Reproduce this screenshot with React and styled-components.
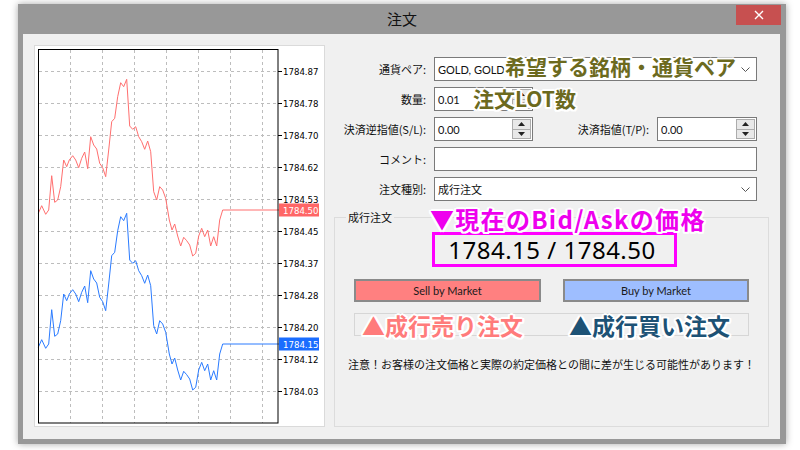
import React from "react";
import styled, { createGlobalStyle } from "styled-components";

const GlobalStyle = createGlobalStyle`
  *, *::before, *::after { box-sizing: border-box; }
  html, body { margin: 0; padding: 0; background: #fff; }
  body { font-family: "Noto Sans", "Noto Sans CJK JP", sans-serif; color: #111; }
`;

const Page = styled.div`
  width: 800px;
  height: 450px;
  overflow: hidden;
  padding: 4px 0 0 18px;
`;

const Window = styled.div`
  width: 768px;
  height: 440px;
  background: #989898;
  box-shadow: 0 0 7px rgba(0, 0, 0, 0.35);
  display: flex;
  flex-direction: column;
`;

const TitleBar = styled.div`
  height: 30px;
  display: grid;
  grid-template-columns: 1fr auto 1fr;
`;

const Title = styled.div`
  grid-column: 2;
  align-self: center;
  font-family: "Noto Sans CJK JP", sans-serif;
  font-size: 15px;
  line-height: 20px;
  color: #111;
`;

const CloseButton = styled.div`
  grid-column: 3;
  justify-self: end;
  margin: 1px 5px 0 0;
  width: 45px;
  height: 20px;
  background: #c75050;
  display: flex;
  align-items: center;
  justify-content: center;
`;

const Content = styled.div`
  flex: 1;
  margin: 0 6px 5px 5px;
  background: #f0f0f0;
  display: flex;
  gap: 9px;
  padding: 11px 11px 12px 11px;
`;

const ChartPanel = styled.div`
  flex: 0 0 291px;
  background: #fff;
  border: 1px solid #dadada;
  svg { display: block; }
`;

const RightPane = styled.div`
  flex: 1;
  min-width: 0;
  display: flex;
  flex-direction: column;
  padding-top: 12px;
`;

const Form = styled.div`
  display: flex;
  flex-direction: column;
  gap: 6px;
  padding-right: 12px;
`;

const Row = styled.div`
  position: relative;
  display: flex;
  align-items: center;
  height: 24px;
`;

const Label = styled.div`
  ${(p) => (p.$grow ? "flex: 1;" : "width: 92px;")}
  margin-right: 8px;
  text-align: right;
  font-family: "Noto Sans CJK JP", sans-serif;
  font-size: 11px;
  white-space: nowrap;
  color: #111;
`;

const Field = styled.div`
  ${(p) => (p.$width ? `flex: 0 0 ${p.$width}px;` : "flex: 1;")}
  height: 24px;
  background: #fff;
  border: 1px solid #7a7a7a;
  display: flex;
  align-items: center;
  padding-left: 3px;
  font-size: 11px;
  font-family: Lato, "Noto Sans CJK JP", sans-serif;
  color: #111;
`;

const FieldText = styled.span`
  flex: 1;
  white-space: nowrap;
`;

const Spinner = styled.div`
  width: 19px;
  height: 20px;
  margin-right: 1px;
  display: flex;
  flex-direction: column;
`;

const SpinButton = styled.div`
  flex: 1;
  background: #e8e8e8;
  border: 1px solid #acacac;
  ${(p) => (p.$down ? "border-top: none;" : "")}
  display: flex;
  align-items: center;
  justify-content: center;
`;

const Chevron = styled.svg`
  margin-right: 6px;
`;

const GroupBox = styled.div`
  position: relative;
  flex: 1;
  margin-top: 16px;
  border: 1px solid #dcdcdc;
  padding: 14px 19px 0 19px;
  display: flex;
  flex-direction: column;
`;

const Caption = styled.div`
  position: absolute;
  top: -9px;
  left: 11px;
  padding: 0 2px;
  background: #f0f0f0;
  font-family: "Noto Sans CJK JP", sans-serif;
  font-size: 11px;
  line-height: 16px;
`;

const PriceRow = styled.div`
  display: flex;
  justify-content: center;
`;

const PriceFrame = styled.div`
  width: 245px;
  height: 35px;
  margin-left: 6px;
  border: 3px solid #ff00ff;
  display: flex;
  align-items: center;
  justify-content: center;
  padding-right: 5px;
  font-family: "Noto Sans", sans-serif;
  font-size: 24px;
  color: #000;
  letter-spacing: 0.5px;
`;

const ButtonRow = styled.div`
  display: grid;
  grid-template-columns: 187px 186px;
  gap: 22px;
  margin-top: 12px;
`;

const ActionButton = styled.div`
  height: 23px;
  background: ${(p) => p.$bg};
  border: 2px solid #8a8a8a;
  display: flex;
  align-items: center;
  justify-content: center;
  font-family: Lato, sans-serif;
  font-size: 11px;
  color: #1a1a1a;
`;

const NoteBox = styled.div`
  display: grid;
  grid-template-columns: 187px 186px;
  gap: 22px;
  margin-top: 11px;
  height: 23px;
  border: 1px solid #d6d6d6;
  align-items: center;
`;

const Warning = styled.div`
  margin: 20px 0 0 -6px;
  font-family: "Noto Sans CJK JP", sans-serif;
  font-size: 11px;
  line-height: 16px;
  white-space: nowrap;
`;

const outline = `
  text-shadow: 2px 0 #fff, -2px 0 #fff, 0 2px #fff, 0 -2px #fff,
    1.5px 1.5px #fff, -1.5px -1.5px #fff, 1.5px -1.5px #fff, -1.5px 1.5px #fff,
    2px 1px #fff, -2px 1px #fff, 2px -1px #fff, -2px -1px #fff;
`;

const Callout = styled.div`
  font-family: "Noto Sans CJK JP", sans-serif;
  font-weight: 700;
  font-size: ${(p) => p.$size}px;
  line-height: ${(p) => p.$size}px;
  color: ${(p) => p.$color};
  letter-spacing: ${(p) => p.$ls || 0}px;
  white-space: nowrap;
  ${outline}
`;

const FloatingCallout = styled(Callout)`
  position: absolute;
  left: ${(p) => p.$left}px;
  top: ${(p) => p.$top}px;
`;

const CellCallout = styled(Callout)`
  padding-left: ${(p) => p.$pad}px;
`;

const red = [
  [38.3, 213.3], [41.7, 205.7], [45.7, 214.3], [48.7, 210], [51.7, 175.7], [54.7, 202.3],
  [57.7, 200], [60.7, 186.7], [63.7, 160], [66.7, 166.7], [69.3, 160], [72.7, 155.7],
  [75.7, 160], [78.7, 167.7], [81.7, 158.3], [84.7, 152], [87.7, 168.7], [90.7, 136.7],
  [93.7, 145], [96.7, 149], [99.7, 163.3], [102.7, 167.7], [105.7, 176.7], [108.7, 150],
  [111.7, 121.7], [114.7, 118.3], [117.7, 96.7], [120.7, 82.7], [123.7, 86.7], [126.7, 79.3],
  [129.7, 126], [132.7, 129.3], [135.7, 126.7], [138.7, 136.7], [141.7, 141.7], [144.7, 149.3],
  [147.7, 141], [150.7, 151.7], [153.7, 191.7], [156.7, 200], [159.7, 186.7], [162.7, 190],
  [165.7, 198.3], [169.3, 220], [172, 230], [174.7, 224], [177.7, 236], [180.7, 246],
  [183.7, 237.3], [186.7, 240.7], [189.7, 245], [192.7, 256], [195.7, 253.3], [198.7, 236],
  [201.7, 228.3], [204.7, 236.7], [207.7, 230], [210.7, 246], [213.7, 236.7], [216.7, 246],
  [219.7, 220], [222.7, 210], [279, 210],
];
const toPts = (arr, dy) => arr.map(([x, y]) => `${x},${y + dy}`).join(" ");

const levels = ["1784.87", "1784.78", "1784.70", "1784.62", "1784.53", "1784.45", "1784.37", "1784.28", "1784.20", "1784.12", "1784.03"];
const vLines = [70, 102, 134, 166, 198, 230, 262];
const axisFont = "'DejaVu Sans', 'Liberation Sans', sans-serif";

function Chart() {
  return (
    <svg width="289" height="380" viewBox="35 46 289 380">
      <g stroke="#bdbdbd" strokeWidth="1" strokeDasharray="3 3">
        {vLines.map((x) => (
          <line key={x} x1={x + 0.5} y1="50" x2={x + 0.5} y2="423" />
        ))}
        {levels.map((l, i) => (
          <line key={l} x1="39" y1={71.5 + 32 * i} x2="278" y2={71.5 + 32 * i} />
        ))}
      </g>
      <polyline points={toPts(red, 0)} fill="none" stroke="#ff6f6f" strokeWidth="1" />
      <polyline points={toPts(red, 134)} fill="none" stroke="#2a7bff" strokeWidth="1" />
      <rect x="38.5" y="49.5" width="239.5" height="373.5" fill="none" stroke="#000" strokeWidth="1" />
      <g stroke="#000">
        {levels.map((l, i) => (
          <line key={l} x1="278" y1={71.5 + 32 * i} x2="282" y2={71.5 + 32 * i} />
        ))}
      </g>
      <g fontFamily={axisFont} fontSize="8.6" fill="#000">
        {levels.map((l, i) => (
          <text key={l} x="283" y={75 + 32 * i}>{l}</text>
        ))}
      </g>
      <rect x="279" y="203.5" width="40" height="13" fill="#ff6666" />
      <text x="283" y="213.5" fontFamily={axisFont} fontSize="8.6" fill="#fff">1784.50</text>
      <rect x="279" y="337.5" width="40" height="13" fill="#1a6dff" />
      <text x="283" y="347.5" fontFamily={axisFont} fontSize="8.6" fill="#fff">1784.15</text>
    </svg>
  );
}

function Spin() {
  return (
    <Spinner>
      <SpinButton>
        <svg width="7" height="4" viewBox="0 0 7 4"><path d="M0 4 L3.5 0 L7 4 Z" fill="#222" /></svg>
      </SpinButton>
      <SpinButton $down>
        <svg width="7" height="4" viewBox="0 0 7 4"><path d="M0 0 L3.5 4 L7 0 Z" fill="#222" /></svg>
      </SpinButton>
    </Spinner>
  );
}

function Down() {
  return (
    <Chevron width="9" height="5" viewBox="0 0 9 5">
      <path d="M0.5 0.5 L4.5 4.5 L8.5 0.5" fill="none" stroke="#555" strokeWidth="1" />
    </Chevron>
  );
}

export default function App() {
  return (
    <>
      <GlobalStyle />
      <Page>
        <Window>
          <TitleBar>
            <Title>注文</Title>
            <CloseButton>
              <svg width="10" height="10" viewBox="0 0 10 10">
                <path d="M1 1 L9 9 M9 1 L1 9" stroke="#fff" strokeWidth="1.4" />
              </svg>
            </CloseButton>
          </TitleBar>
          <Content>
            <ChartPanel>
              <Chart />
            </ChartPanel>
            <RightPane>
              <Form>
                <Row>
                  <Label>通貨ペア:</Label>
                  <Field>
                    <FieldText>GOLD, GOLD</FieldText>
                    <Down />
                  </Field>
                  <FloatingCallout $size={21} $color="#6c6a1e" $left={171} $top={-1}>
                    希望する銘柄・通貨ペア
                  </FloatingCallout>
                </Row>
                <Row>
                  <Label>数量:</Label>
                  <Field $width={99}>
                    <FieldText>0.01</FieldText>
                    <Spin />
                  </Field>
                  <FloatingCallout $size={21} $color="#6c6a1e" $left={139} $top={1}>
                    注文LOT数
                  </FloatingCallout>
                </Row>
                <Row>
                  <Label>決済逆指値(S/L):</Label>
                  <Field $width={99}>
                    <FieldText>0.00</FieldText>
                    <Spin />
                  </Field>
                  <Label $grow>決済指値(T/P):</Label>
                  <Field $width={100}>
                    <FieldText>0.00</FieldText>
                    <Spin />
                  </Field>
                </Row>
                <Row>
                  <Label>コメント:</Label>
                  <Field />
                </Row>
                <Row>
                  <Label>注文種別:</Label>
                  <Field>
                    <FieldText>成行注文</FieldText>
                    <Down />
                  </Field>
                </Row>
              </Form>
              <GroupBox>
                <Caption>成行注文</Caption>
                <FloatingCallout $size={24} $color="#ee00ee" $left={95} $top={-11} $ls={1.3}>
                  ▼現在のBid/Askの価格
                </FloatingCallout>
                <PriceRow>
                  <PriceFrame>1784.15 / 1784.50</PriceFrame>
                </PriceRow>
                <ButtonRow>
                  <ActionButton $bg="#ff8080">Sell by Market</ActionButton>
                  <ActionButton $bg="#9ebeff">Buy by Market</ActionButton>
                </ButtonRow>
                <NoteBox>
                  <CellCallout $size={23} $color="#ff7b7b" $pad={7}>▲成行売り注文</CellCallout>
                  <CellCallout $size={23} $color="#1d5275" $pad={5}>▲成行買い注文</CellCallout>
                </NoteBox>
                <Warning>注意！お客様の注文価格と実際の約定価格との間に差が生じる可能性があります！</Warning>
              </GroupBox>
            </RightPane>
          </Content>
        </Window>
      </Page>
    </>
  );
}
